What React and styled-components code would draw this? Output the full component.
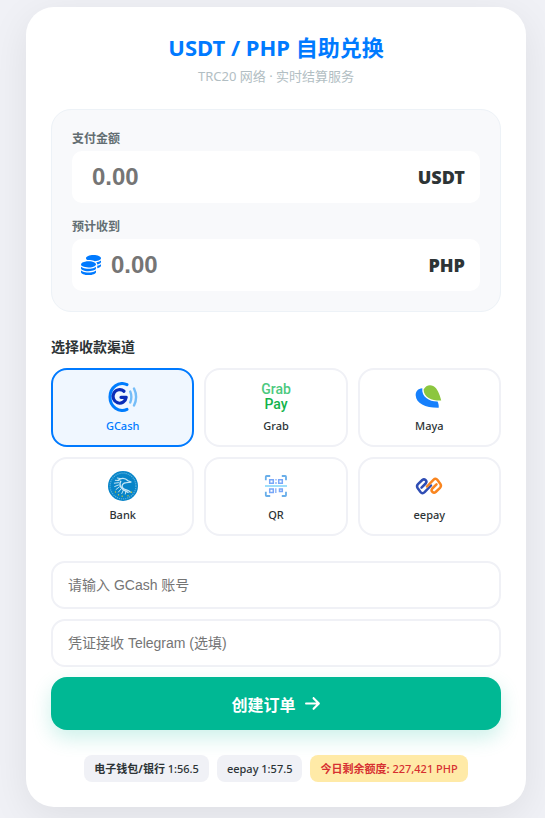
import React, { useState } from "react";
import styled, { createGlobalStyle } from "styled-components";
import { FaCoins, FaArrowRight } from "react-icons/fa6";

const GlobalStyle = createGlobalStyle`
  * { box-sizing: border-box; }
  body {
    margin: 0;
    background: #f0f1f6;
    color: #2d3436;
    font-family: "Noto Sans", "Noto Sans CJK SC", sans-serif;
  }
  button, input { font-family: inherit; color: inherit; }
`;

const Page = styled.div`
  display: flex;
  justify-content: center;
  padding: 7px 19px 11px 26px;
`;

const Card = styled.main`
  width: 100%;
  max-width: 500px;
  padding: 25px;
  border-radius: 28px;
  background: #ffffff;
  box-shadow: 0 10px 40px rgba(0, 0, 0, 0.08);
`;

const Header = styled.header`
  text-align: center;
  margin-bottom: 23px;
`;

const Title = styled.h1`
  margin: 0;
  color: #007aff;
  font-size: 22px;
  line-height: 30px;
  font-weight: 700;
`;

const Subtitle = styled.p`
  margin: 5px 0 0;
  color: #b2bec3;
  font-size: 13px;
  line-height: 19px;
`;

const AmountPanel = styled.section`
  display: flex;
  flex-direction: column;
  gap: 15px;
  padding: 20px;
  border: 1px solid #edf2f7;
  border-radius: 20px;
  background: #f8f9fb;
`;

const FieldLabel = styled.label`
  display: block;
  margin-bottom: 3px;
  color: #636e72;
  font-size: 12px;
  line-height: 18px;
  font-weight: 700;
`;

const AmountBox = styled.div`
  display: flex;
  align-items: center;
  gap: 10px;
  height: 52px;
  padding: 0 15px 0 ${(p) => (p.$withIcon ? "9px" : "20px")};
  border-radius: 10px;
  background: #ffffff;
  svg { flex: none; color: #007aff; }
`;

const AmountInput = styled.input`
  flex: 1;
  min-width: 0;
  padding: 0;
  border: 0;
  outline: 0;
  background: transparent;
  font: 700 24px "Liberation Sans", sans-serif;
  &::placeholder { color: #757575; opacity: 1; }
`;

const Currency = styled.span`
  font-size: 18px;
  font-weight: 900;
`;

const SectionTitle = styled.h2`
  margin: 24px 0 11px;
  font-size: 14px;
  line-height: 21px;
  font-weight: 700;
`;

const ChannelGrid = styled.div`
  display: grid;
  grid-template-columns: repeat(3, 1fr);
  gap: 10px;
  margin-bottom: 25px;
`;

const Channel = styled.button`
  display: flex;
  flex-direction: column;
  align-items: center;
  gap: 6px;
  height: 79px;
  padding: 12px 8px;
  border: 2px solid ${(p) => (p.$active ? "#007aff" : "#f0f1f6")};
  border-radius: 16px;
  background: ${(p) => (p.$active ? "#f0f7ff" : "#ffffff")};
  color: ${(p) => (p.$active ? "#007aff" : "#2d3436")};
  font-size: 11px;
  line-height: 16px;
  font-weight: 500;
  cursor: pointer;
`;

const Logo = styled.svg`
  width: 30px;
  height: 30px;
  flex: none;
`;

const Form = styled.form`
  display: flex;
  flex-direction: column;
  gap: 10px;
`;

const TextInput = styled.input`
  width: 100%;
  height: 48px;
  padding: 0 15px;
  border: 2px solid #f0f1f6;
  border-radius: 14px;
  outline: 0;
  background: #ffffff;
  font: 14px "Liberation Sans", "Noto Sans CJK SC", sans-serif;
  &::placeholder { color: #757575; opacity: 1; }
`;

const SubmitButton = styled.button`
  display: flex;
  align-items: center;
  justify-content: center;
  gap: 8px;
  height: 53px;
  border: 0;
  border-radius: 16px;
  background: #00b894;
  color: #ffffff;
  font-size: 16px;
  font-weight: 700;
  cursor: pointer;
  box-shadow: 0 8px 20px rgba(0, 184, 148, 0.2);
`;

const Rates = styled.footer`
  display: flex;
  flex-wrap: wrap;
  justify-content: center;
  gap: 8px;
  margin-top: 25px;
`;

const Rate = styled.span`
  padding: 5px 10px;
  border-radius: 8px;
  background: ${(p) => (p.$warn ? "#ffeaa7" : "#f0f1f6")};
  color: ${(p) => (p.$warn ? "#d63031" : "#2d3436")};
  font-size: 11px;
  line-height: 17px;
  font-weight: 500;
  white-space: nowrap;
  b { font-weight: 700; }
`;

const GCashLogo = () => (
  <Logo viewBox="0 0 30 30" fill="none" strokeLinecap="round" aria-hidden="true">
    <path d="M19 2.700A12.2 13.4 0 1 0 19 27.300" stroke="#007dfe" strokeWidth="3" />
    <path d="M16 9.300A6.600 6.800 0 1 0 18.2 15.3H13" stroke="#0a2db8" strokeWidth="3.200" strokeLinejoin="round" />
    <path d="M22.2 9.5Q24.5 15 22.2 20.5M26 6.5Q30.2 15 26 23.5" stroke="#75bdf8" strokeWidth="2.4" />
  </Logo>
);

const LogoText = styled.text`
  font-family: Roboto, sans-serif;
  font-size: 14px;
  font-weight: 500;
  text-anchor: middle;
`;

const GrabLogo = () => (
  <Logo viewBox="0 0 30 30" overflow="visible" aria-hidden="true">
    <LogoText>
      <tspan x="15" y="12" fill="#4cc97e">Grab</tspan>
      <tspan x="15" y="27" fill="#13b34b">Pay</tspan>
    </LogoText>
  </Logo>
);

const MayaLogo = () => (
  <Logo viewBox="0 0 30 30" aria-hidden="true">
    <path d="M8.300 6.300C4 6.500 1.500 9.500 1.700 13.500 2.200 21.500 11.500 25.900 24.700 25.700 25 23.700 24.400 21.200 23.500 19.600 15.500 19.800 7.300 15 8.300 6.300Z" fill="#1680fc" />
    <path d="M9.600 7.400C11.700 3.400 15.800 2.100 19.200 4 23.500 6.400 25.500 12 27.200 18.500 18.500 18.900 9.700 15.500 9.600 7.400Z" fill="#8cc63f" />
  </Logo>
);

const BankLogo = () => (
  <Logo viewBox="0 0 30 30" fill="none" aria-hidden="true">
    <circle cx="15" cy="15" r="15" fill="#0784c8" />
    <circle cx="15" cy="15" r="12.900" stroke="#5cb2dd" strokeWidth="1.200" strokeDasharray="1.200 .9" />
    <g stroke="#c4e6f6" strokeLinecap="round">
      <path d="M10 9.500C13 6.500 17 6.700 20 9.800l3.300 1.300-4.800.5c-3.500.1-5.600 2.700-3.800 5.300 1.700 2.400 5.200 1.700 7.500 4.100" strokeWidth="1.300" />
      <path d="M12.500 7.600 9.300 7M11 9.500 7.300 9.300M10.500 11.700 6.300 12.200M10.500 14 6.700 15.500M11.300 16 8 18.500M13 18l-2.500 3M15.300 19.300l-1.500 3.200M18 19.700l-.7 3.300" strokeWidth="1" />
      <path d="M12.700 10.300Q10.200 14.500 15.500 18.800L20 21.300" strokeWidth="1.500" />
    </g>
    <path d="M7.500 20.300v1.500M10.500 23v1.500M14.200 24.500V26M20 24v1.500M23.500 20.500V22" stroke="#b2bd4c" strokeWidth="1.200" />
  </Logo>
);

const QrLogo = () => (
  <Logo viewBox="0 0 30 30" fill="none" aria-hidden="true">
    <path d="M4.800 9.200V5.800Q4.800 5 5.600 5H9.200M20.800 5h3.400q.8 0 .8.800v3.400M4.800 20.800v3.400q0 .8.800.8h3.600M20.800 25h3.400q.8 0 .8-.8v-3.400" stroke="#69aee9" strokeWidth="1.800" />
    <path d="M4 15H26" stroke="#88d8fb" strokeWidth="1.600" />
    <path d="M8.700 8.700h3.600v3.600H8.700ZM17.700 8.700h3.600v3.600h-3.600ZM8.700 18h3.600v3.400H8.700ZM18.500 18h2.800v2.600h-2.800Z" stroke="#78a7f8" strokeWidth="1.500" />
    <path d="M15 8v1.600M15 11v2M14.800 17.300V22" stroke="#8db6f9" strokeWidth="1.400" />
  </Logo>
);

const EepayLogo = () => (
  <Logo viewBox="0 0 30 30" fill="none" strokeWidth="2.500" strokeLinecap="round" strokeLinejoin="round" aria-hidden="true">
    <path d="M7.500 16.700 11.700 12.500Q13.300 10.500 11.500 9 10 7.700 8.300 9L4 13.200Q2.300 15 3.600 17L6.500 21Q8.400 23.200 10.600 21.200L17 14.500" stroke="#2f4db4" />
    <path d="M22.500 13.300 18.300 17.500Q16.700 19.500 18.500 21 20 22.300 21.700 21L26 16.800Q27.700 15 26.400 13L23.500 9Q21.600 6.800 19.400 8.800L13 15.500" stroke="#f9851f" />
  </Logo>
);

const channels = [
  { name: "GCash", Icon: GCashLogo },
  { name: "Grab", Icon: GrabLogo },
  { name: "Maya", Icon: MayaLogo },
  { name: "Bank", Icon: BankLogo },
  { name: "QR", Icon: QrLogo },
  { name: "eepay", Icon: EepayLogo },
];

export default function App() {
  const [selected, setSelected] = useState("GCash");
  return (
    <>
      <GlobalStyle />
      <Page>
        <Card>
          <Header>
            <Title>USDT / PHP 自助兑换</Title>
            <Subtitle>TRC20 网络 · 实时结算服务</Subtitle>
          </Header>

          <AmountPanel>
            <div>
              <FieldLabel htmlFor="pay">支付金额</FieldLabel>
              <AmountBox>
                <AmountInput id="pay" inputMode="decimal" placeholder="0.00" />
                <Currency>USDT</Currency>
              </AmountBox>
            </div>
            <div>
              <FieldLabel htmlFor="receive">预计收到</FieldLabel>
              <AmountBox $withIcon>
                <FaCoins size={20} aria-hidden="true" />
                <AmountInput id="receive" placeholder="0.00" readOnly />
                <Currency>PHP</Currency>
              </AmountBox>
            </div>
          </AmountPanel>

          <SectionTitle>选择收款渠道</SectionTitle>
          <ChannelGrid>
            {channels.map(({ name, Icon }) => (
              <Channel
                key={name}
                type="button"
                $active={name === selected}
                aria-pressed={name === selected}
                onClick={() => setSelected(name)}
              >
                <Icon />
                {name}
              </Channel>
            ))}
          </ChannelGrid>

          <Form onSubmit={(e) => e.preventDefault()}>
            <TextInput aria-label="收款账号" placeholder={`请输入 ${selected} 账号`} />
            <TextInput aria-label="Telegram" placeholder="凭证接收 Telegram (选填)" />
            <SubmitButton type="submit">
              创建订单
              <FaArrowRight size={17} aria-hidden="true" />
            </SubmitButton>
          </Form>

          <Rates>
            <Rate><b>电子钱包/银行</b> 1:56.5</Rate>
            <Rate>eepay 1:57.5</Rate>
            <Rate $warn><b>今日剩余额度:</b> 227,421 PHP</Rate>
          </Rates>
        </Card>
      </Page>
    </>
  );
}
